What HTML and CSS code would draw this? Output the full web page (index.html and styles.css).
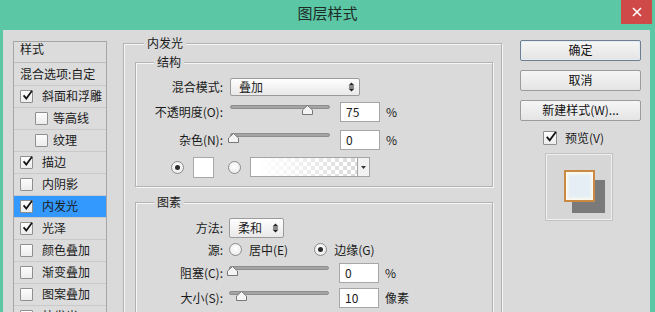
FILE: index.html
```html
<!DOCTYPE html>
<html lang="zh-CN">
<head>
<meta charset="utf-8">
<title>图层样式</title>
<link rel="stylesheet" href="styles.css">
</head>
<body>
<div class="window">
  <header class="titlebar">
    <h1 class="title">图层样式</h1>
    <button class="close" type="button" aria-label="关闭">
      <svg width="10" height="10" viewBox="0 0 10 10"><path d="M1 1L9 9M9 1L1 9" stroke="#fff" stroke-width="1.6"/></svg>
    </button>
  </header>

  <div class="dialog">
    <aside class="styles-list">
      <div class="list-head">样式</div>
      <div class="list-row plain">混合选项:自定</div>
      <div class="list-row"><span class="cb on"><svg viewBox="0 0 13 13"><path d="M2.6 6.4L5.3 9.6L11 1.8"/></svg></span>斜面和浮雕</div>
      <div class="list-row sub"><span class="cb"></span>等高线</div>
      <div class="list-row sub"><span class="cb"></span>纹理</div>
      <div class="list-row"><span class="cb on"><svg viewBox="0 0 13 13"><path d="M2.6 6.4L5.3 9.6L11 1.8"/></svg></span>描边</div>
      <div class="list-row"><span class="cb"></span>内阴影</div>
      <div class="list-row active"><span class="cb on"><svg viewBox="0 0 13 13"><path d="M2.6 6.4L5.3 9.6L11 1.8"/></svg></span>内发光</div>
      <div class="list-row"><span class="cb on"><svg viewBox="0 0 13 13"><path d="M2.6 6.4L5.3 9.6L11 1.8"/></svg></span>光泽</div>
      <div class="list-row"><span class="cb"></span>颜色叠加</div>
      <div class="list-row"><span class="cb"></span>渐变叠加</div>
      <div class="list-row"><span class="cb"></span>图案叠加</div>
      <div class="list-row"><span class="cb"></span>外发光</div>
    </aside>

    <main class="panel">
      <fieldset class="group outer">
        <legend>内发光</legend>

        <fieldset class="group sub-group">
          <legend>结构</legend>
          <div class="form-grid struct">
            <span class="lbl">混合模式:</span>
            <div class="ctl">
              <div class="select wide"><span>叠加</span>
                <svg class="updown" width="7" height="10" viewBox="0 0 7 10"><path d="M3.5 0.5L6.5 3.5H0.5Z M0.5 6.5H6.5L3.5 9.5Z" fill="#222"/><path d="M1 5H6" stroke="#222" stroke-width="1"/></svg>
              </div>
            </div>

            <span class="lbl">不透明度(O):</span>
            <div class="ctl">
              <div class="slider"><div class="track"></div><svg class="thumb" style="left:74%" width="11" height="10" viewBox="0 0 11 10"><path d="M5.5 0.5L10.5 5V9.5H0.5V5Z" fill="#f4f4f4" stroke="#777"/></svg></div>
              <span class="num">75</span><span class="unit">%</span>
            </div>

            <span class="lbl">杂色(N):</span>
            <div class="ctl">
              <div class="slider"><div class="track"></div><svg class="thumb" style="left:0%" width="11" height="10" viewBox="0 0 11 10"><path d="M5.5 0.5L10.5 5V9.5H0.5V5Z" fill="#f4f4f4" stroke="#777"/></svg></div>
              <span class="num">0</span><span class="unit">%</span>
            </div>

            <div class="color-row">
              <span class="radio on"></span>
              <span class="swatch"></span>
              <span class="radio"></span>
              <div class="gradient">
                <span class="gradient-fill"></span>
                <span class="gradient-drop"><svg width="5" height="3" viewBox="0 0 5 3"><path d="M0 0H5L2.5 3Z" fill="#333"/></svg></span>
              </div>
            </div>
          </div>
        </fieldset>

        <fieldset class="group sub-group second">
          <legend>图素</legend>
          <div class="form-grid elements">
            <span class="lbl">方法:</span>
            <div class="ctl">
              <div class="select narrow"><span>柔和</span>
                <svg class="updown" width="7" height="10" viewBox="0 0 7 10"><path d="M3.5 0.5L6.5 3.5H0.5Z M0.5 6.5H6.5L3.5 9.5Z" fill="#222"/><path d="M1 5H6" stroke="#222" stroke-width="1"/></svg>
              </div>
            </div>

            <span class="lbl">源:</span>
            <div class="ctl source">
              <span class="radio"></span><span class="opt">居中(E)</span>
              <span class="radio on gap"></span><span class="opt">边缘(G)</span>
            </div>

            <span class="lbl">阻塞(C):</span>
            <div class="ctl">
              <div class="slider"><div class="track"></div><svg class="thumb" style="left:0%" width="11" height="10" viewBox="0 0 11 10"><path d="M5.5 0.5L10.5 5V9.5H0.5V5Z" fill="#f4f4f4" stroke="#777"/></svg></div>
              <span class="num">0</span><span class="unit">%</span>
            </div>

            <span class="lbl">大小(S):</span>
            <div class="ctl">
              <div class="slider"><div class="track"></div><svg class="thumb" style="left:9%" width="11" height="10" viewBox="0 0 11 10"><path d="M5.5 0.5L10.5 5V9.5H0.5V5Z" fill="#f4f4f4" stroke="#777"/></svg></div>
              <span class="num">10</span><span class="unit">像素</span>
            </div>
          </div>
        </fieldset>
      </fieldset>
    </main>

    <aside class="actions">
      <button class="btn default" type="button">确定</button>
      <button class="btn" type="button">取消</button>
      <button class="btn" type="button">新建样式(W)...</button>
      <div class="preview-toggle"><span class="cb on big"><svg viewBox="0 0 13 13"><path d="M2.6 6.4L5.3 9.6L11 1.8"/></svg></span>预览(V)</div>
      <div class="preview">
        <span class="pv-shadow"></span>
        <span class="pv-front"></span>
      </div>
    </aside>
  </div>
</div>
</body>
</html>
```

FILE: styles.css
```css
* { box-sizing: border-box; }

body {
  margin: 0;
  width: 655px;
  height: 312px;
  overflow: hidden;
  background: #5bc7a5;
  font: 12px/1.2 "Noto Sans CJK SC", "Noto Sans", sans-serif;
  color: #1b1b1b;
}

.window { width: 655px; height: 312px; }

/* title bar */
.titlebar {
  display: grid;
  grid-template-columns: 1fr auto 1fr;
  height: 30px;
}
.title {
  grid-column: 2;
  margin: 0;
  font-size: 15px;
  font-weight: normal;
  line-height: 26px;
  color: #1e2b27;
}
.close {
  grid-column: 3;
  justify-self: end;
  width: 31px;
  height: 24px;
  margin-right: 3px;
  padding: 0;
  border: 0;
  background: #cf4949;
  display: flex;
  align-items: center;
  justify-content: center;
}

/* dialog body */
.dialog {
  display: flex;
  align-items: flex-start;
  height: 282px;
  margin: 0 5px 0 3px;
  padding: 0 9px 0 10px;
  background: #dadada;
  overflow: hidden;
}

/* left styles list */
.styles-list {
  width: 94px;
  flex: none;
  margin-top: 11px;
  border: 1px solid #a6a6a6;
  background: #dcdcdc;
}
.list-head {
  height: 21px;
  padding-left: 6px;
  line-height: 14px;
  border-bottom: 1px solid #bcbcbc;
}
.list-row {
  height: 22px;
  display: flex;
  align-items: center;
  gap: 9px;
  padding-left: 6px;
  border-bottom: 1px solid #c9c9c9;
  white-space: nowrap;
}
.list-row.plain { height: 23px; }
.list-row.sub { padding-left: 21px; gap: 5px; }
.list-row.active { background: #3399ff; }

.cb {
  width: 13px;
  height: 13px;
  flex: none;
  border: 1px solid #8f8f8f;
  border-radius: 1px;
  background: linear-gradient(#fdfdfd, #ececec);
  position: relative;
}
.cb svg {
  position: absolute;
  left: 0;
  top: -2px;
  width: 13px;
  height: 13px;
  fill: none;
  stroke: #111;
  stroke-width: 1.7;
}
.cb.big { width: 14px; height: 14px; }
.cb.big svg { width: 14px; height: 14px; }

/* main panel */
.panel {
  width: 379px;
  flex: none;
  margin-left: 16px;
  margin-top: 6px;
}
.group {
  margin: 0;
  min-width: 0;
  border: 1px solid #b3b3b3;
  box-shadow: 1px 1px 0 #f6f6f6, inset 1px 1px 0 #f6f6f6;
}
.group > legend {
  padding: 0 3px;
  line-height: 14px;
  background: #dadada;
}
.outer {
  height: 300px;
  padding: 5px 8px 0 11px;
}
.outer > legend { margin-left: 9px; }

.sub-group { padding: 7px 0 6px 0; }
.sub-group > legend { margin-left: 18px; }
.sub-group.second { margin-top: 8px; padding-top: 8px; }

.form-grid {
  display: grid;
  grid-template-columns: 87px auto;
  column-gap: 7px;
  align-items: center;
}
.struct { grid-template-rows: 22px 28px 28px 26px; }
.elements { grid-template-rows: 22px 22px 24px 26px; column-gap: 6px; }

.lbl { text-align: right; white-space: nowrap; }
.ctl { display: flex; align-items: center; }

/* select */
.select {
  display: flex;
  align-items: center;
  justify-content: space-between;
  border: 1px solid #9b9b9b;
  border-radius: 2px;
  background: linear-gradient(#fefefe, #e9e9e9);
  padding: 0 4px 0 8px;
}
.select.wide { width: 130px; height: 18px; }
.select.narrow { width: 55px; height: 20px; }

/* slider */
.slider {
  position: relative;
  width: 100px;
  height: 14px;
}
.track {
  height: 4px;
  border-radius: 2px;
  background: #a4a4a4;
  border: 1px solid #8e8e8e;
}
.thumb {
  position: absolute;
  top: 0;
  margin-left: -2px;
}

.num {
  width: 40px;
  height: 20px;
  margin-left: 10px;
  padding-left: 5px;
  line-height: 18px;
  font-size: 12px;
  background: #fff;
  border: 1px solid #a7a7a7;
}
.unit { margin-left: 6px; }

/* radio + colour row */
.color-row {
  grid-column: 1 / -1;
  display: flex;
  align-items: center;
  padding-left: 35px;
}
.radio {
  width: 13px;
  height: 13px;
  flex: none;
  border-radius: 50%;
  border: 1px solid #8c8c8c;
  background: radial-gradient(circle at 50% 40%, #ffffff, #e6e6e6);
  display: grid;
  place-items: center;
}
.radio.on::after {
  content: "";
  width: 5px;
  height: 5px;
  border-radius: 50%;
  background: #2b2b2b;
}
.swatch {
  width: 21px;
  height: 21px;
  margin: 0 14px 0 9px;
  background: #fff;
  border: 1px solid #a9a9a9;
}
.gradient {
  display: flex;
  width: 120px;
  height: 20px;
  margin-left: 9px;
  border: 1px solid #a5a5a5;
}
.gradient-fill {
  flex: 1;
  background:
    linear-gradient(to right, #fff 8%, rgba(255,255,255,0) 95%),
    conic-gradient(#dcdcdc 25%, #fff 0 50%, #dcdcdc 0 75%, #fff 0) 0 0 / 8px 8px;
}
.gradient-drop {
  width: 12px;
  border-left: 1px solid #a5a5a5;
  background: #f2f2f2;
  display: grid;
  place-items: center;
}

.source .radio { margin-left: 0; }
.source .opt { margin-left: 7px; }
.source .radio.gap { margin-left: 26px; }

/* right column */
.actions {
  width: 121px;
  flex: none;
  margin-left: 18px;
  margin-top: 10px;
  display: flex;
  flex-direction: column;
}
.btn {
  height: 21px;
  margin-bottom: 9px;
  padding: 0;
  font: inherit;
  color: #111;
  border: 1px solid #9c9c9c;
  border-radius: 2px;
  background: linear-gradient(#f6f6f6, #e4e4e4);
}
.btn.default {
  border-color: #6f7f8f;
  box-shadow: inset 0 0 0 1px #e2ecf5;
}
.preview-toggle {
  display: flex;
  align-items: center;
  gap: 8px;
  height: 14px;
  padding-left: 23px;
  margin-top: 1px;
}
.preview {
  display: grid;
  width: 68px;
  height: 68px;
  margin: 8px 0 0 25px;
  border: 1px solid #c2c2c2;
  box-shadow: inset 1px 1px 0 #efefef, inset -1px -1px 0 #efefef;
  background: #d6d6d6;
}
.pv-shadow, .pv-front { grid-area: 1 / 1; }
.pv-shadow {
  width: 33px;
  height: 33px;
  margin: 26px 0 0 26px;
  background: #7a7a7a;
}
.pv-front {
  width: 31px;
  height: 32px;
  margin: 16px 0 0 18px;
  border: 2px solid #c98b43;
  background: #e4eef4;
  box-shadow: inset 0 0 3px 2px #fffaf0;
}
```
